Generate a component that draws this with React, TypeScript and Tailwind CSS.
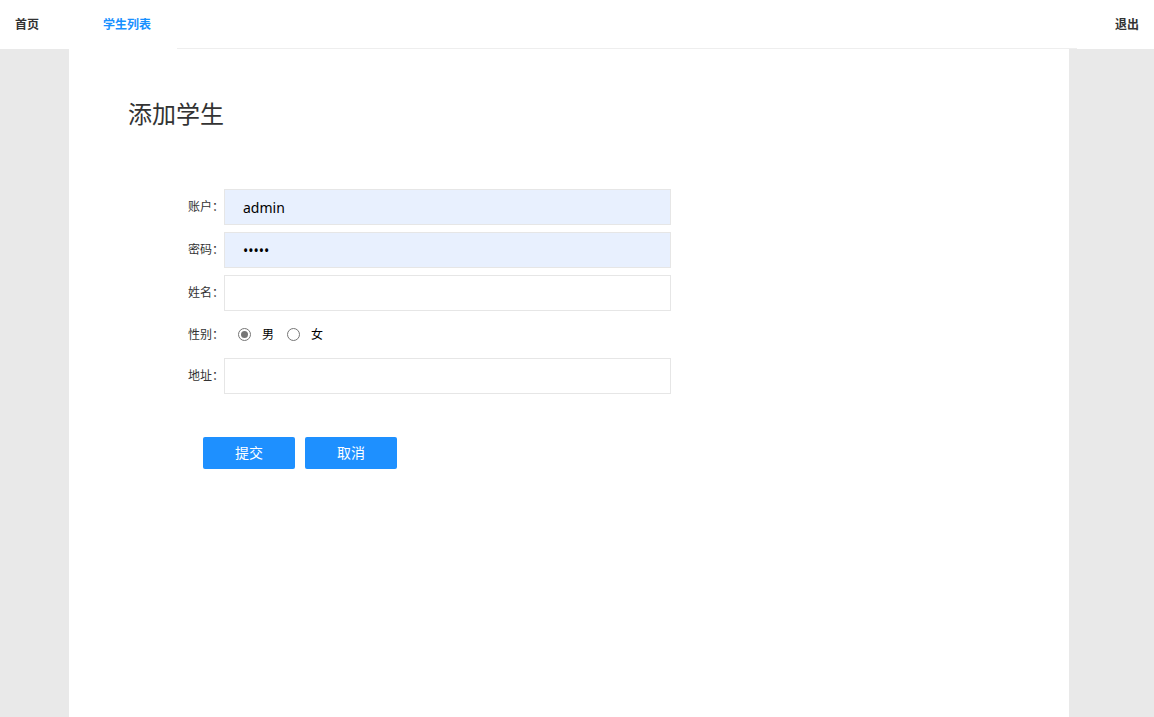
import React from "react"

const font = { fontFamily: '"Noto Sans", "Noto Sans CJK SC", sans-serif' }

function Field({ label, value, type = "text", filled = false }: { label: string; value?: string; type?: string; filled?: boolean }) {
  return (
    <div className="flex items-center h-9">
      <label className="w-[54px] text-right text-xs text-[#333]">{label}：</label>
      <input
        type={type}
        defaultValue={value}
        className={`w-[447px] h-9 border border-[#e6e6e6] pl-[18px] text-sm text-black outline-none ${filled ? "bg-[#e8f0fe]" : "bg-white"}`}
      />
    </div>
  )
}

function Radio({ checked, label }: { checked?: boolean; label: string }) {
  return (
    <span className="flex items-center">
      <span className="w-[13px] h-[13px] rounded-full border border-[#767676] flex items-center justify-center bg-white">
        {checked && <span className="w-[7px] h-[7px] rounded-full bg-[#767676]" />}
      </span>
      <span className="ml-[11px] text-xs text-black">{label}</span>
    </span>
  )
}

export default function App() {
  return (
    <div className="min-h-screen bg-[#e9e9e9]" style={font}>
      <header className="flex h-[49px] bg-white">
        <nav className="flex w-[177px] text-xs font-bold">
          <a className="pl-[15px] pt-[17px] text-[#333]">首页</a>
          <a className="pl-[64px] pt-[17px] text-[#1890ff]">学生列表</a>
        </nav>
        <div className="flex-1 border-b border-[#eeeeee]" />
        <div className="w-[77px] pt-[17px] pr-[15px] text-right text-xs font-bold text-[#333]">退出</div>
      </header>

      <main className="ml-[69px] w-[1000px] min-h-[668px] bg-white pl-[59px] pt-[49px]">
        <h1 className="text-2xl text-[#333] leading-8">添加学生</h1>

        <form className="mt-[59px] ml-[42px] flex flex-col gap-[7px]">
          <Field label="账户" value="admin" filled />
          <Field label="密码" value="admin" type="password" filled />
          <Field label="姓名" />
          <div className="flex items-center h-[33px]">
            <label className="w-[54px] text-right text-xs text-[#333]">性别：</label>
            <div className="flex items-center gap-[13px] pl-[14px]">
              <Radio checked label="男" />
              <Radio label="女" />
            </div>
          </div>
          <Field label="地址" />

          <div className="flex gap-[10px] mt-[36px] ml-[33px]">
            <button type="button" className="w-[92px] h-8 rounded-[2px] bg-[#1e90ff] text-sm text-white">提交</button>
            <button type="button" className="w-[92px] h-8 rounded-[2px] bg-[#1e90ff] text-sm text-white">取消</button>
          </div>
        </form>
      </main>
    </div>
  )
}
